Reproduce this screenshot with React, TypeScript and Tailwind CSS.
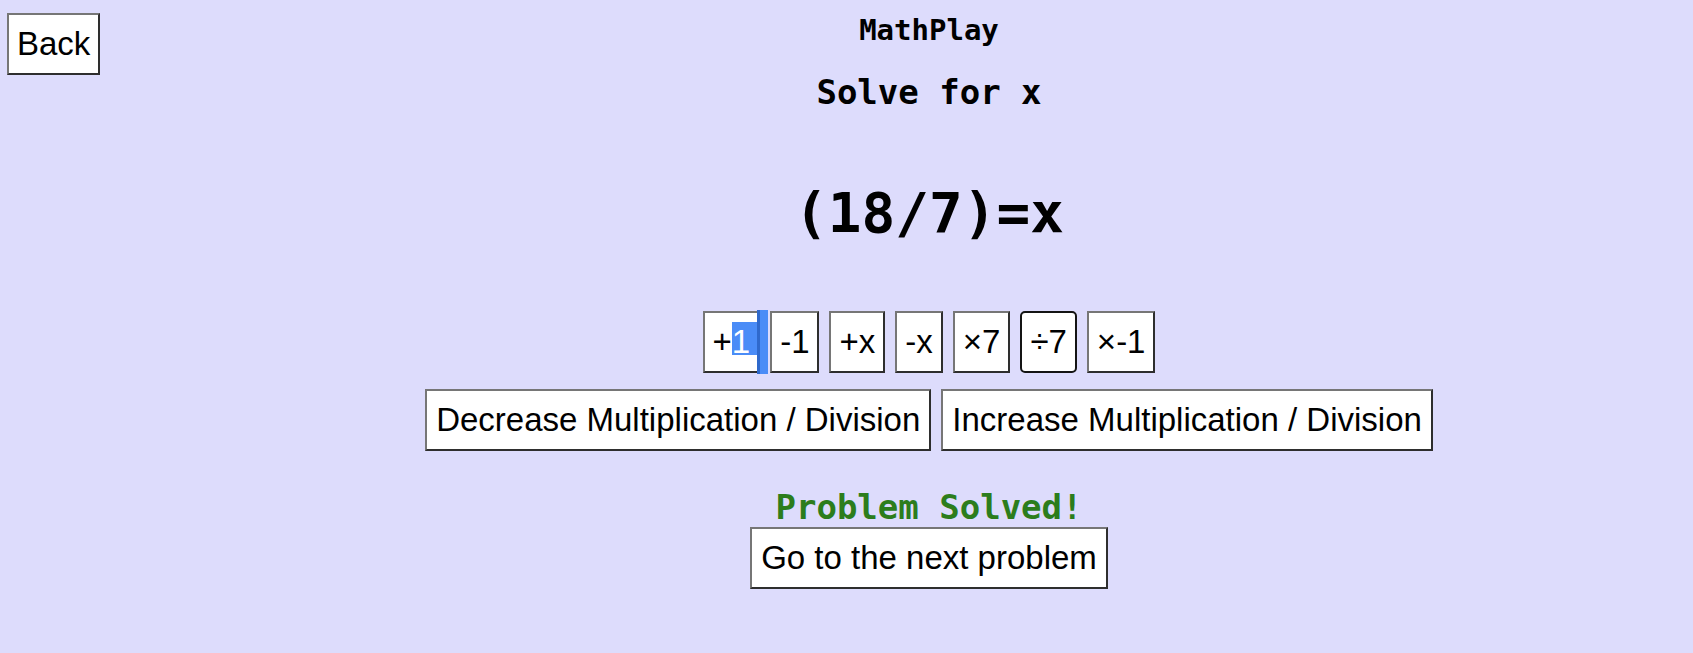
import React from "react";

const btn =
  "bg-white text-black text-[33px] leading-[38px] py-[10px] border-2 border-t-[#767676] border-l-[#767676] border-r-[#2e2e2e] border-b-[#2e2e2e] whitespace-nowrap";

const mono = "font-['DejaVu_Sans_Mono',monospace] font-bold leading-none";

export default function App() {
  const ops = ["-1", "+x", "-x", "×7"];
  return (
    <div className="min-h-[653px] w-full bg-[#dddcfc] flex font-['Liberation_Sans',Arial,sans-serif]">
      <div className="w-[165px] shrink-0">
        <button className={`${btn} px-2 mt-[13px] ml-[7px]`}>Back</button>
      </div>
      <div className="flex-1 flex flex-col items-center">
        <div className={`${mono} mt-[16px] text-[29px] text-black`}>MathPlay</div>
        <div className={`${mono} mt-[30px] text-[34px] text-black`}>Solve for x</div>
        <div className={`${mono} mt-[76px] text-[56px] text-black`}>(18/7)=x</div>
        <div className="mt-[70px] flex gap-[10px]">
          <button className={`${btn} px-2 relative`}>
            +
            <span className="relative">
              <span className="absolute left-0 right-[-8px] top-[-1px] h-[33px] bg-[#4a8cf7]"></span>
              <span className="relative text-white">1</span>
            </span>
            <span className="absolute top-[-3px] bottom-[-3px] left-[calc(100%-1px)] w-[11px] flex">
              <span className="w-[3px] bg-[#2f69cc]"></span>
              <span className="flex-1 bg-[#4a8cf7]"></span>
            </span>
          </button>
          {ops.map((o) => (
            <button key={o} className={`${btn} px-2`}>
              {o}
            </button>
          ))}
          <button className="bg-white text-black text-[33px] leading-[38px] py-[10px] px-2 border-2 border-[#141414] rounded-[5px]">
            ÷7
          </button>
          <button className={`${btn} px-2`}>×-1</button>
        </div>
        <div className="mt-[16px] flex gap-[10px]">
          <button className={`${btn} px-[9px]`}>Decrease Multiplication / Division</button>
          <button className={`${btn} px-[9px]`}>Increase Multiplication / Division</button>
        </div>
        <div className={`${mono} mt-[39px] text-[34px] text-[#2c7d1c]`}>Problem Solved!</div>
        <button className={`${btn} px-[9px] mt-[3px]`}>Go to the next problem</button>
      </div>
    </div>
  );
}
